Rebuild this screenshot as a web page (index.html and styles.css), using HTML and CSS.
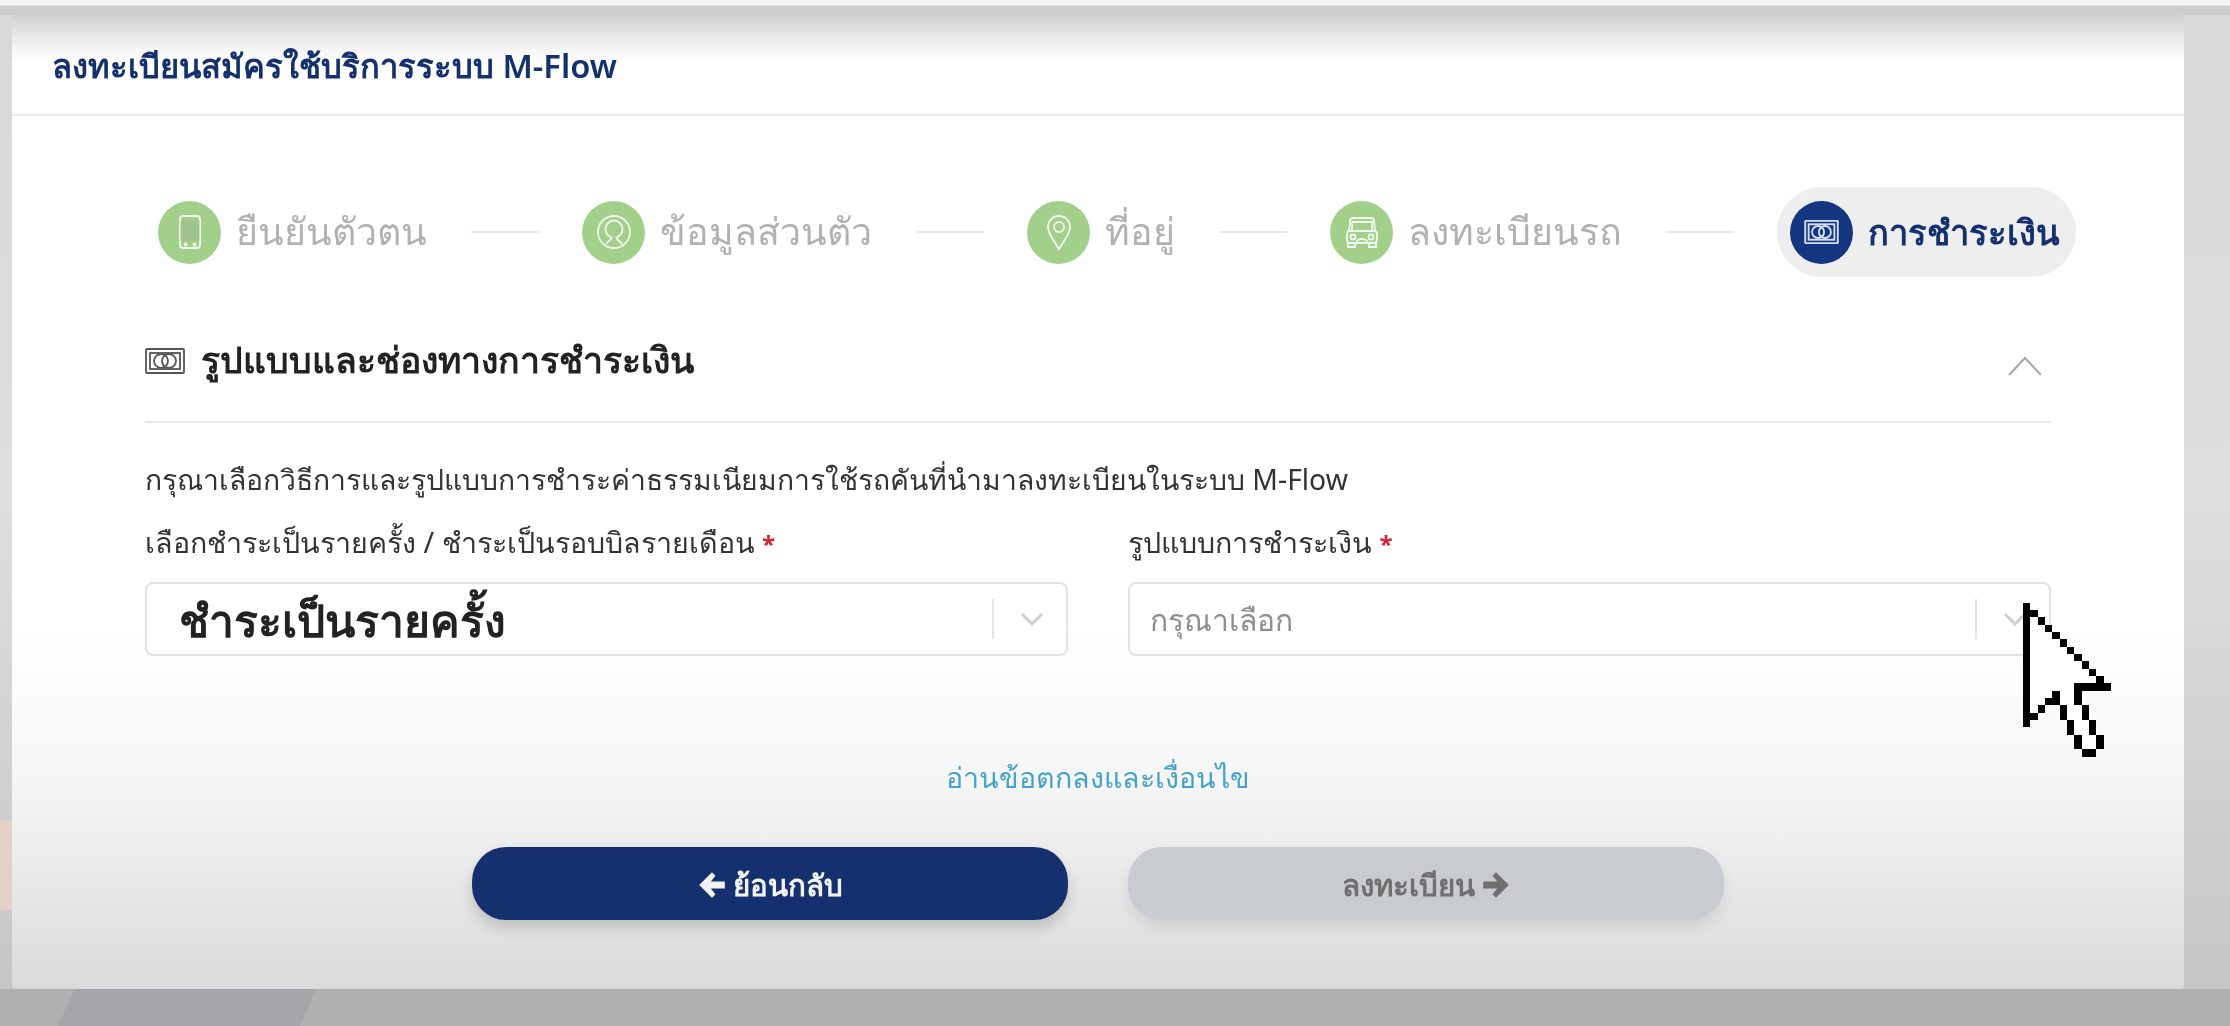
FILE: index.html
```html
<!DOCTYPE html>
<html lang="th">
<head>
<meta charset="utf-8">
<title>M-Flow</title>
<link rel="stylesheet" href="styles.css">
</head>
<body>
<div class="page">
  <div class="decor-pink"></div>
  <div class="decor-slab"></div>
  <main class="card">
    <header class="card-head"><h1 class="card-title">ลงทะเบียนสมัครใช้บริการระบบ M-Flow</h1></header>
    <div class="card-body">
      <nav class="steps">
        <div class="step">
          <span class="dot">
            <svg class="dot-icon" viewBox="0 0 40 40"><rect x="10" y="4" width="20" height="32" rx="3"/><rect class="phone-screen" x="10" y="9" width="20" height="20"/><circle cx="15.500" cy="32.500" r="1"/><circle cx="24.500" cy="32.500" r="1"/></svg>
          </span>
          <span class="step-label">ยืนยันตัวตน</span>
        </div>
        <span class="step-line"></span>
        <div class="step">
          <span class="dot">
            <svg class="dot-icon" viewBox="0 0 40 40"><circle cx="20" cy="20" r="16"/><path d="M12 32c2-4 5-3 5.500-6.500C14 24 11.500 21 11.500 17a8.500 8.500 0 0 1 17 0c0 4-2.500 7-6 8.500C23 29 26 28 28 32"/></svg>
          </span>
          <span class="step-label">ข้อมูลส่วนตัว</span>
        </div>
        <span class="step-line"></span>
        <div class="step">
          <span class="dot">
            <svg class="dot-icon" viewBox="0 0 40 40"><path d="M20 37C14 27 9 22 9 15a11 11 0 0 1 22 0c0 7-5 12-11 22z"/><circle cx="20" cy="15" r="5"/></svg>
          </span>
          <span class="step-label">ที่อยู่</span>
        </div>
        <span class="step-line"></span>
        <div class="step">
          <span class="dot">
            <svg class="dot-icon" viewBox="0 0 40 40"><path d="M7 19l1-10a3 3 0 0 1 3-3h18a3 3 0 0 1 3 3l1 10"/><path d="M10 10h20v8"/><path d="M10 10v8"/><rect x="5" y="19" width="30" height="12" rx="3"/><circle cx="11" cy="25" r="2.500"/><circle cx="29" cy="25" r="2.500"/><path d="M15 30c0-4 10-4 10 0M6 31v4h7v-4M27 31v4h7v-4"/></svg>
          </span>
          <span class="step-label">ลงทะเบียนรถ</span>
        </div>
        <span class="step-line"></span>
        <div class="step step-active">
          <span class="dot dot-active">
            <svg class="dot-icon-pay" viewBox="0 0 40 28"><rect x="1" y="1" width="38" height="26" rx="1"/><rect x="5" y="5" width="30" height="18"/><circle cx="16" cy="14" r="7"/><circle cx="24" cy="14" r="7"/></svg>
          </span>
          <span class="step-label step-label-active">การชำระเงิน</span>
        </div>
      </nav>

      <section class="section-head">
        <div class="section-title-wrap">
          <svg class="section-icon" viewBox="0 0 40 26"><rect x="1" y="1" width="38" height="24" rx="1"/><rect x="5" y="5" width="30" height="16"/><circle cx="16" cy="13" r="7"/><circle cx="24" cy="13" r="7"/></svg>
          <h2 class="section-title">รูปแบบและช่องทางการชำระเงิน</h2>
        </div>
        <svg class="collapse" viewBox="0 0 34 20"><path d="M1 19L17 2l16 17"/></svg>
      </section>

      <p class="intro">กรุณาเลือกวิธีการและรูปแบบการชำระค่าธรรมเนียมการใช้รถคันที่นำมาลงทะเบียนในระบบ M-Flow</p>

      <div class="fields">
        <div class="field">
          <label class="field-label">เลือกชำระเป็นรายครั้ง / ชำระเป็นรอบบิลรายเดือน <span class="req">*</span></label>
          <div class="select">
            <span class="select-value">ชำระเป็นรายครั้ง</span>
            <span class="select-sep"></span>
            <svg class="select-chev" viewBox="0 0 24 14"><path d="M2 2l10 10L22 2"/></svg>
          </div>
        </div>
        <div class="field">
          <label class="field-label">รูปแบบการชำระเงิน <span class="req">*</span></label>
          <div class="select">
            <span class="select-placeholder">กรุณาเลือก</span>
            <span class="select-sep"></span>
            <svg class="select-chev" viewBox="0 0 24 14"><path d="M2 2l10 10L22 2"/></svg>
          </div>
        </div>
      </div>

      <a class="terms" href="#">อ่านข้อตกลงและเงื่อนไข</a>

      <div class="actions">
        <button class="btn btn-back" type="button">
          <svg class="btn-arrow" viewBox="0 0 24 24"><path d="M12 1L1 12l11 11 3-3-4-5h12V9H11l4-5z"/></svg>
          <span class="btn-text">ย้อนกลับ</span>
        </button>
        <button class="btn btn-next" type="button">
          <span class="btn-text">ลงทะเบียน</span>
          <svg class="btn-arrow" viewBox="0 0 24 24"><path d="M12 1l11 11-11 11-3-3 4-5H1V9h12L9 4z"/></svg>
        </button>
      </div>
    </div>
  </main>
  <svg class="cursor" viewBox="0 0 12 21" shape-rendering="crispEdges">
    <path class="cursor-fill" d="M0 0L12 12H8L11 20H8L5 13L0 17z"/>
    <path class="cursor-ink" d="M0 0h1v17H0zM1 1h1v1H1zM2 2h1v1H2zM3 3h1v1H3zM4 4h1v1H4zM5 5h1v1H5zM6 6h1v1H6zM7 7h1v1H7zM8 8h1v1H8zM9 9h1v1H9zM10 10h1v1h-1zM7 11h5v1H8v2H7zM8 14h1v2H8zM9 16h1v2H9zM10 18h1v2h-1zM8 20h2v1H8zM7 18h1v2H7zM6 16h1v2H6zM5 14h1v2H5zM4 12h1v2H3v-1h1zM2 14h1v1H2zM1 15h1v1H1z"/>
  </svg>
</div>
</body>
</html>
```

FILE: styles.css
```css
* { box-sizing: border-box; }
html, body { margin: 0; padding: 0; }
body { font-family: "Noto Sans", "Open Sans", sans-serif; }

.page {
  position: relative;
  width: 2230px;
  height: 1026px;
  overflow: hidden;
  padding: 15px 46px 0 12px;
  background:
    linear-gradient(to bottom, #f4f4f4 0, #f4f4f4 5px, #cdcdcd 6px, #cdcdcd 15px, transparent 15px),
    linear-gradient(to bottom, transparent 989px, #b0b0b0 989px),
    linear-gradient(to bottom, #d8d8d8 0, #dedede 500px, #c6c6c6 989px);
}

.decor-pink {
  position: absolute;
  left: 0;
  top: 820px;
  width: 12px;
  height: 90px;
  background: #e4cfca;
}
.decor-slab {
  position: absolute;
  left: 58px;
  top: 989px;
  width: 258px;
  height: 37px;
  background: #a6a6aa;
  clip-path: polygon(16px 0, 100% 0, 242px 100%, 0 100%);
}

.card {
  position: relative;
  width: 2172px;
  height: 974px;
  border-radius: 4px;
  background:
    linear-gradient(to bottom, #d0d0d0 0, #f2f2f2 30px, #ffffff 48px, transparent 48px),
    linear-gradient(to bottom, #ffffff 0, #ffffff 610px, #f5f5f5 770px, #dadada 974px);
  filter: blur(0.6px);
}

.card-head {
  height: 101px;
  padding: 2px 0 0 40px;
  display: flex;
  align-items: center;
  border-bottom: 2px solid #e9e9e9;
}
.card-title {
  margin: 0;
  font-size: 32.700px;
  font-weight: 600;
  color: #14306e;
}

.card-body { padding: 71px 133px 0 133px; }

.steps {
  display: flex;
  align-items: center;
  gap: 43.500px;
  height: 90px;
  padding-left: 13px;
}
.step { display: flex; align-items: center; gap: 15px; }
.step-active {
  height: 90px;
  margin-left: auto;
  padding: 0 16px 0 13px;
  border-radius: 45px;
  background: #eeeeef;
}
.dot {
  flex: none;
  width: 63px;
  height: 63px;
  border-radius: 50%;
  background: #a2d08a;
  display: flex;
  align-items: center;
  justify-content: center;
}
.dot-active { background: #14357f; }
.dot-icon {
  width: 40px;
  height: 40px;
  fill: none;
  stroke: #f1f8ec;
  stroke-width: 1.800;
}
.phone-screen { fill: rgba(150, 150, 150, .22); stroke: none; }
.dot-icon-pay {
  width: 35px;
  height: 24px;
  fill: none;
  stroke: #d5deef;
  stroke-width: 2.200;
}
.step-label { font-size: 37.500px; font-weight: 500; color: #b0b1b5; white-space: nowrap; }
.step-label-active { font-size: 34.500px; font-weight: 700; color: #14306e; }
.step-line { flex: none; width: 68px; height: 2px; background: #e9e9e9; }

.section-head {
  margin-top: 55px;
  height: 91px;
  padding-bottom: 32px;
  display: flex;
  align-items: center;
  justify-content: space-between;
  border-bottom: 2px solid #e9e9e9;
}
.section-title-wrap { display: flex; align-items: center; gap: 16px; }
.section-icon {
  width: 40px;
  height: 26px;
  fill: none;
  stroke: #555;
  stroke-width: 1.800;
}
.section-title { margin: 0; font-size: 35.600px; font-weight: 600; color: #222; }
.collapse {
  width: 34px;
  height: 20px;
  margin-right: 9px;
  margin-top: 10px;
  fill: none;
  stroke: #a6a6a6;
  stroke-width: 2;
}

.intro {
  margin: 36px 0 0;
  font-size: 28.300px;
  line-height: 40px;
  color: #333;
}

.fields {
  margin-top: 23px;
  display: grid;
  grid-template-columns: 923px 923px;
  column-gap: 60px;
}
.field-label {
  display: block;
  font-size: 28.600px;
  line-height: 40px;
  color: #333;
}
.req { color: #d8232f; font-size: 24px; font-weight: 700; }

.select {
  margin-top: 18px;
  height: 74px;
  display: flex;
  align-items: center;
  border: 2px solid #e2e2e2;
  border-radius: 8px;
  background: #fff;
  padding: 0 22px 0 32px;
}
.select-value { flex: 1; font-size: 44.400px; font-weight: 600; color: #222; padding-top: 4px; }
.select-placeholder { flex: 1; margin-left: -12px; padding-top: 2px; font-size: 30px; color: #8e8e8e; }
.select-sep { width: 2px; height: 40px; background: #e4e4e4; margin-right: 26px; }
.select-chev {
  width: 24px;
  height: 14px;
  fill: none;
  stroke: #cfcfcf;
  stroke-width: 3;
}

.terms {
  display: block;
  margin-top: 101px;
  text-align: center;
  font-size: 28.600px;
  line-height: 40px;
  color: #43a3c9;
  text-decoration: none;
}

.actions {
  margin-top: 50px;
  display: grid;
  grid-template-columns: 596px 596px;
  column-gap: 60px;
  justify-content: center;
}
.btn {
  height: 73px;
  border: 0;
  border-radius: 34px;
  display: flex;
  align-items: center;
  justify-content: center;
  gap: 7px;
  font-family: inherit;
  font-size: 29.500px;
  font-weight: 600;
}
.btn-text { padding-top: 4px; }
.btn-back { background: #14306e; color: #f2f2f2; box-shadow: 0 8px 14px rgba(0,0,0,.16); }
.btn-next { background: #c8cbcf; color: #6f6f6f; box-shadow: 0 8px 14px rgba(0,0,0,.08); }
.btn-arrow { width: 28px; height: 28px; margin-top: 2px; fill: currentColor; }

.cursor {
  position: absolute;
  left: 2023px;
  top: 602px;
  width: 88px;
  height: 155px;
  filter: blur(0.4px);
}
.cursor-fill { fill: #fff; }
.cursor-ink { fill: #000; }
```
